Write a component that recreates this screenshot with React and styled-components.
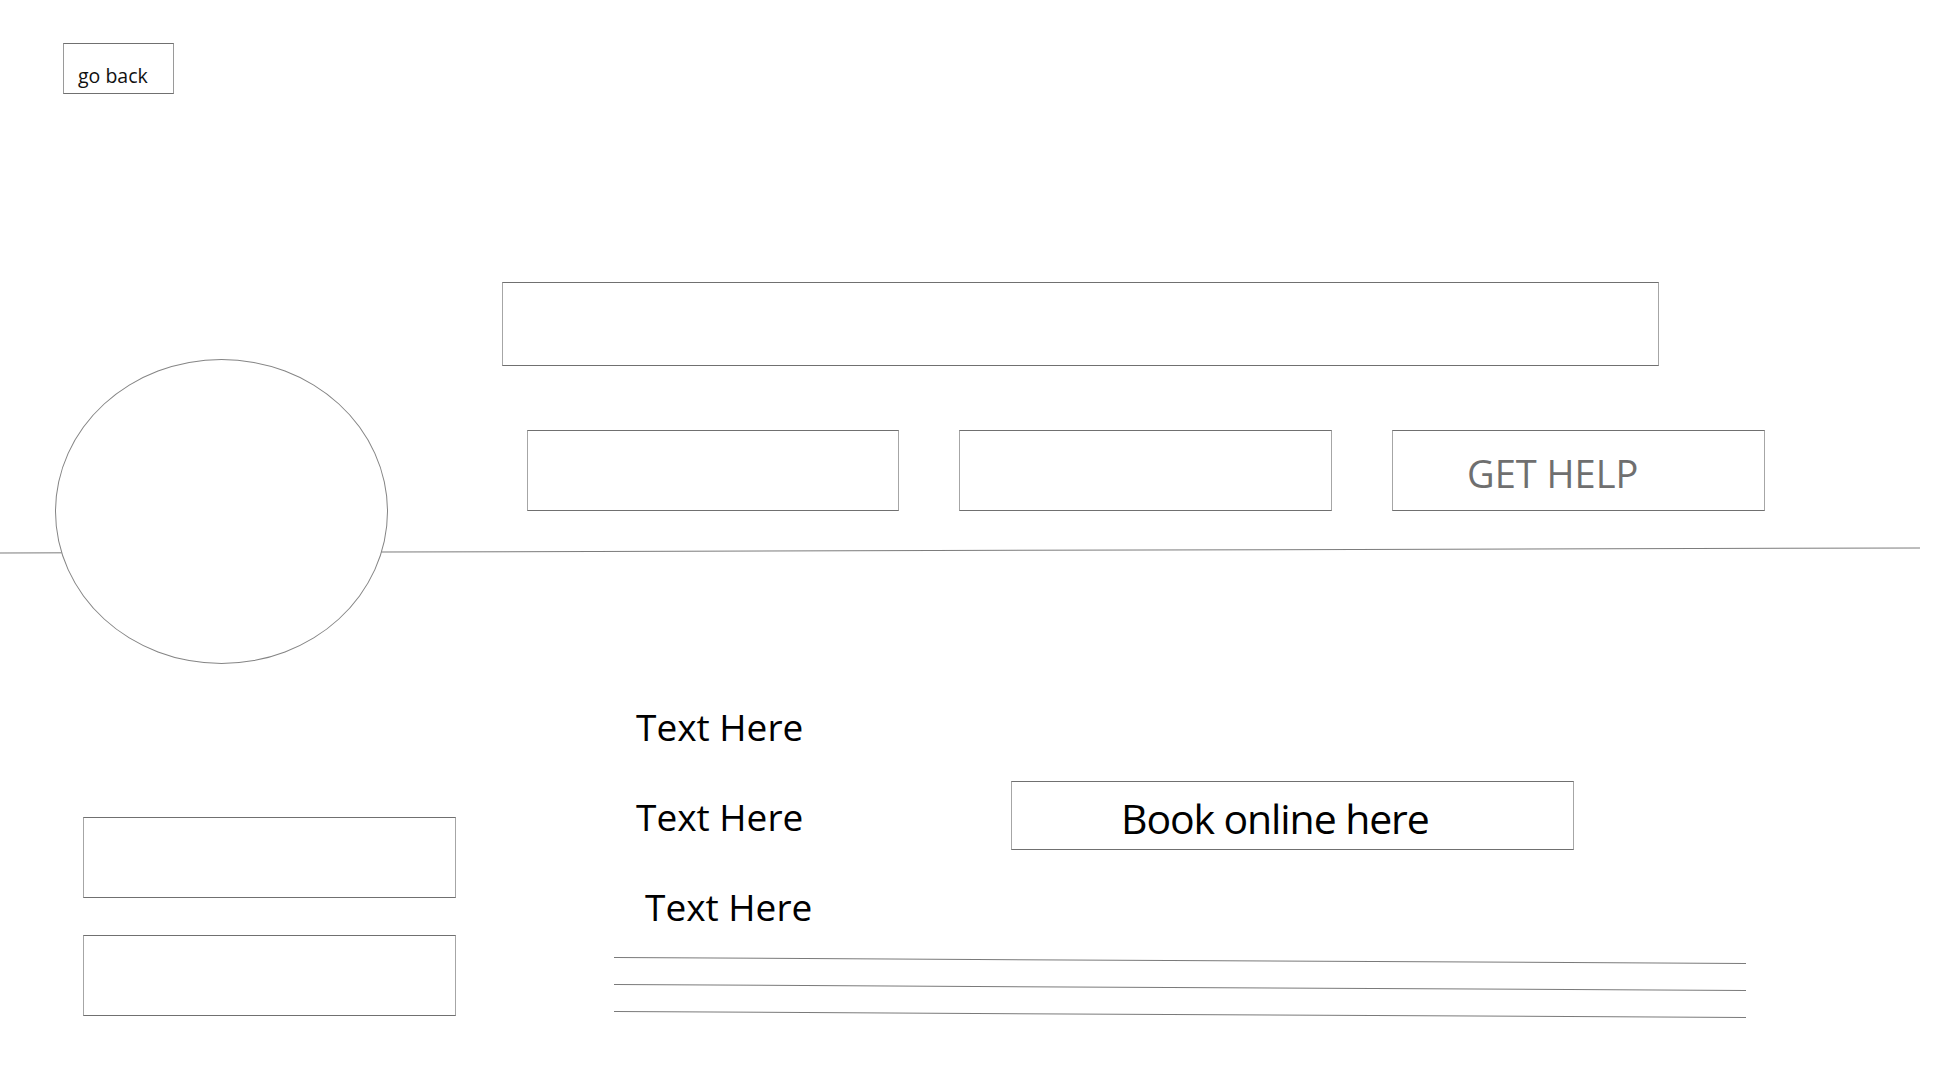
import React from 'react'
import styled, { createGlobalStyle } from 'styled-components'

const GlobalStyle = createGlobalStyle`
  html, body {
    margin: 0;
    padding: 0;
    background: #ffffff;
  }
  body {
    font-family: 'Open Sans', 'Noto Sans', 'Liberation Sans', sans-serif;
    color: #000;
  }
  * {
    box-sizing: border-box;
  }
`

const Page = styled.div`
  width: 1920px;
  height: 1080px;
  overflow: hidden;
`

const TopBar = styled.div`
  padding: 43px 0 0 63px;
  height: 94px;
`

const BackButton = styled.button`
  display: block;
  width: 111px;
  height: 51px;
  margin: 0;
  padding: 14px 0 0 14px;
  border: 1px solid #707070;
  border-left-color: #9a9a9a;
  border-right-color: #9a9a9a;
  background: #fff;
  font-family: inherit;
  font-size: 19.5px;
  line-height: 20px;
  color: #111;
  text-align: left;
  cursor: pointer;
`

const Hero = styled.section`
  display: flex;
  align-items: flex-start;
  height: 456px;
  padding-left: 55px;
`

const Avatar = styled.div`
  position: relative;
  z-index: 1;
  flex-shrink: 0;
  width: 333px;
  height: 305px;
  margin-top: 265px;
  border: 1px solid #858585;
  border-radius: 50%;
  background: #fff;
`

const Controls = styled.div`
  display: flex;
  flex-direction: column;
  margin: 188px 0 0 114px;
`

const Box = styled.div`
  width: ${p => p.$w}px;
  height: ${p => p.$h}px;
  border: 1px solid #707070;
  border-left-color: #a6a6a6;
  border-right-color: #a6a6a6;
  background: #fff;
`

const ButtonRow = styled.div`
  display: flex;
  gap: 60px;
  margin-top: 64px;
  padding-left: 25px;
`

const HelpButton = styled(Box)`
  padding: 23px 0 0 74px;
  font-size: 38px;
  line-height: 38px;
  color: #6f6f6f;
  white-space: nowrap;
`

const Divider = styled.div`
  width: 1920px;
  height: 1px;
  background: #7c7c7c;
  transform: rotate(-0.149deg);
`

const Lower = styled.section`
  display: flex;
  align-items: flex-start;
`

const SideColumn = styled.div`
  display: flex;
  flex-direction: column;
  gap: 37px;
  margin-top: 266px;
  padding-left: 83px;
`

const Content = styled.div`
  display: flex;
  flex-direction: column;
  margin: 131px 0 0 158px;
`

const InfoRow = styled.div`
  display: flex;
  align-items: flex-start;
`

const TextList = styled.div`
  width: 397px;
  padding-left: 22px;
`

const TextLine = styled.div`
  font-size: 37px;
  line-height: 90px;
  padding-left: ${p => p.$indent || 0}px;
  white-space: nowrap;
`

const BookButton = styled(Box)`
  margin-top: 99px;
  padding: 16px 0 0 109px;
  font-size: 41px;
  line-height: 41px;
  letter-spacing: -1.1px;
  white-space: nowrap;
`

const Rules = styled.div`
  display: flex;
  flex-direction: column;
  gap: 26px;
  margin-top: 8px;
`

const Rule = styled.div`
  width: 1132px;
  height: 1px;
  background: #7a7a7a;
  transform: rotate(0.3deg);
`

export default function App() {
  return (
    <Page>
      <GlobalStyle />
      <TopBar>
        <BackButton>go back</BackButton>
      </TopBar>
      <Hero>
        <Avatar />
        <Controls>
          <Box $w={1157} $h={84} />
          <ButtonRow>
            <Box $w={372} $h={81} />
            <Box $w={373} $h={81} />
            <HelpButton $w={373} $h={81}>GET HELP</HelpButton>
          </ButtonRow>
        </Controls>
      </Hero>
      <Divider />
      <Lower>
        <SideColumn>
          <Box $w={373} $h={81} />
          <Box $w={373} $h={81} />
        </SideColumn>
        <Content>
          <InfoRow>
            <TextList>
              <TextLine>Text Here</TextLine>
              <TextLine>Text Here</TextLine>
              <TextLine $indent={9}>Text Here</TextLine>
            </TextList>
            <BookButton $w={563} $h={69}>Book online here</BookButton>
          </InfoRow>
          <Rules>
            <Rule />
            <Rule />
            <Rule />
          </Rules>
        </Content>
      </Lower>
    </Page>
  )
}
